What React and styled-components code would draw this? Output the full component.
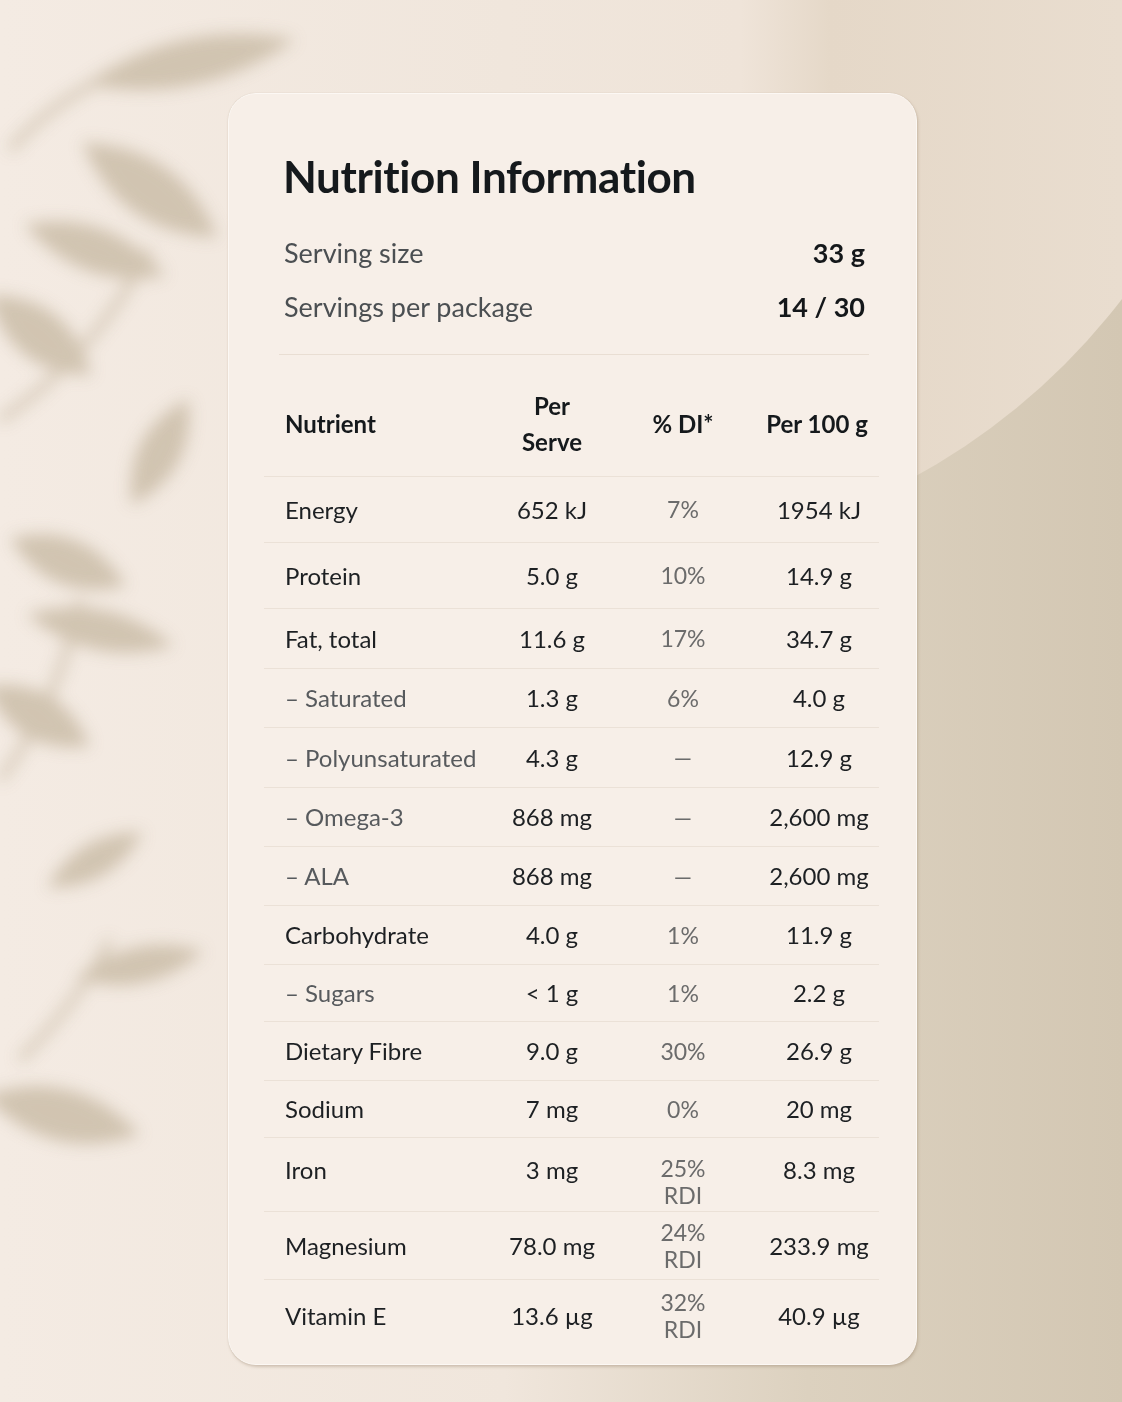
import React from "react";
import styled, { createGlobalStyle } from "styled-components";

const GlobalStyle = createGlobalStyle`
  html, body {
    margin: 0;
    padding: 0;
  }
  body {
    background: #f3e9e0;
    font-family: Lato, "Liberation Sans", sans-serif;
    -webkit-font-smoothing: antialiased;
  }
`;

const Page = styled.div`
  position: relative;
  width: 1122px;
  height: 1402px;
  overflow: hidden;
  box-sizing: border-box;
  padding: 93px 0 0 228px;
`;

const Backdrop = styled.svg`
  position: absolute;
  left: 0;
  top: 0;
  width: 1122px;
  height: 1402px;
  z-index: 0;
`;

const Card = styled.section`
  position: relative;
  z-index: 1;
  width: 689px;
  box-sizing: border-box;
  padding: 56px 37px 12px 35px;
  background: #f7efe8;
  border-radius: 28px;
  border: 1px solid #fcf8f4;
  box-shadow: 1px 2px 3px rgba(150, 125, 100, 0.35),
    0 0 1px rgba(150, 125, 100, 0.35);
`;

const Title = styled.h1`
  margin: 0 0 0 19px;
  font-size: 44px;
  line-height: 53px;
  font-weight: 700;
  letter-spacing: -0.4px;
  font-variant-ligatures: none;
  color: #15191c;
`;

const Summary = styled.div`
  margin: 22px 14px 0 20px;
`;

const SummaryRow = styled.div`
  display: flex;
  justify-content: space-between;
  align-items: center;
  height: 54px;
  font-size: 27px;
`;

const SummaryLabel = styled.span`
  color: #4b4f52;
`;

const SummaryValue = styled.span`
  color: #14171a;
  font-weight: 700;
`;

const Divider = styled.hr`
  margin: 21px 10px 0 15px;
  border: 0;
  border-top: 1px solid #e9ded3;
`;

const Table = styled.div`
  margin-top: 22px;
`;

const Row = styled.div`
  display: grid;
  grid-template-columns: 227px 122px 140px 128px;
  align-items: ${(p) => (p.$top ? "start" : "center")};
  box-sizing: border-box;
  min-height: ${(p) => p.$h}px;
  padding-top: ${(p) => (p.$top ? 17 : 0)}px;
  border-bottom: ${(p) => (p.$last ? "none" : "1px solid #ebe1d7")};
`;

const HeadCell = styled.div`
  font-size: 24px;
  line-height: 36px;
  font-weight: 700;
  color: #15191c;
  text-align: ${(p) => p.$align || "center"};
  padding-left: ${(p) => (p.$align === "left" ? 21 : 0)}px;
  padding-bottom: 6px;
`;

const NameCell = styled.div`
  padding-left: 21px;
  font-size: 24px;
  line-height: 30px;
  color: ${(p) => (p.$sub ? "#575a5d" : "#1d2023")};
`;

const ValueCell = styled.div`
  font-size: 24px;
  line-height: 30px;
  text-align: center;
  color: #1d2023;
  padding-left: ${(p) => p.$shift || 0}px;
`;

const DiCell = styled.div`
  font-size: 23px;
  line-height: 27px;
  text-align: center;
  color: #6b6b6b;
`;

const rows = [
  { name: "Energy", serve: "652 kJ", di: ["7%"], per100: "1954 kJ", h: 66 },
  { name: "Protein", serve: "5.0 g", di: ["10%"], per100: "14.9 g", h: 66 },
  { name: "Fat, total", serve: "11.6 g", di: ["17%"], per100: "34.7 g", h: 60 },
  { name: "Saturated", sub: true, serve: "1.3 g", di: ["6%"], per100: "4.0 g", h: 59 },
  { name: "Polyunsaturated", sub: true, serve: "4.3 g", di: ["—"], per100: "12.9 g", h: 60 },
  { name: "Omega-3", sub: true, serve: "868 mg", di: ["—"], per100: "2,600 mg", h: 59 },
  { name: "ALA", sub: true, serve: "868 mg", di: ["—"], per100: "2,600 mg", h: 59 },
  { name: "Carbohydrate", serve: "4.0 g", di: ["1%"], per100: "11.9 g", h: 59 },
  { name: "Sugars", sub: true, serve: "< 1 g", di: ["1%"], per100: "2.2 g", h: 57 },
  { name: "Dietary Fibre", serve: "9.0 g", di: ["30%"], per100: "26.9 g", h: 59 },
  { name: "Sodium", serve: "7 mg", di: ["0%"], per100: "20 mg", h: 57 },
  { name: "Iron", serve: "3 mg", di: ["25%", "RDI"], per100: "8.3 mg", h: 74, top: true },
  { name: "Magnesium", serve: "78.0 mg", di: ["24%", "RDI"], per100: "233.9 mg", h: 68 },
  { name: "Vitamin E", serve: "13.6 µg", di: ["32%", "RDI"], per100: "40.9 µg", h: 72 },
];

// blurred leaf shadows on the left: [cx, cy, length, width, angle]
const leaves = [
  [190, 62, 215, 46, -12],
  [150, 190, 165, 54, 35],
  [95, 250, 150, 44, 20],
  [40, 335, 130, 50, 38],
  [160, 452, 120, 42, -62],
  [68, 562, 125, 46, 22],
  [100, 630, 150, 40, 12],
  [38, 716, 120, 46, 30],
  [95, 860, 110, 34, -30],
  [140, 965, 130, 36, -12],
  [62, 1115, 160, 52, 14],
];

function Leaf({ cx, cy, len, wid, angle }) {
  const h = len / 2;
  const d = `M ${-h} 0 Q 0 ${-wid} ${h} 0 Q 0 ${wid} ${-h} 0 Z`;
  return <path d={d} transform={`translate(${cx} ${cy}) rotate(${angle})`} />;
}

function Scenery() {
  return (
    <Backdrop viewBox="0 0 1122 1402" aria-hidden="true">
      <defs>
        <linearGradient id="base" gradientUnits="userSpaceOnUse" x1="0" y1="0" x2="1122" y2="0">
          <stop offset="0" stopColor="#f4ebe3" />
          <stop offset="0.45" stopColor="#f0e6dc" />
          <stop offset="0.72" stopColor="#dcd1bf" />
          <stop offset="1" stopColor="#d3c7b3" />
        </linearGradient>
        <linearGradient id="lit" gradientUnits="userSpaceOnUse" x1="0" y1="0" x2="1122" y2="0">
          <stop offset="0" stopColor="#f4ebe3" />
          <stop offset="0.45" stopColor="#f0e6dc" />
          <stop offset="0.66" stopColor="#efe4d9" />
          <stop offset="0.74" stopColor="#e5d8c8" />
          <stop offset="1" stopColor="#e9ddcf" />
        </linearGradient>
        <filter id="soft" x="-50%" y="-50%" width="200%" height="200%">
          <feGaussianBlur stdDeviation="8" />
        </filter>
      </defs>
      <rect width="1122" height="1402" fill="url(#base)" />
      <circle cx="600" cy="-100" r="657" fill="url(#lit)" />
      <g fill="#cbbda8" opacity="0.85" filter="url(#soft)">
        {leaves.map(([cx, cy, len, wid, angle], i) => (
          <Leaf key={i} cx={cx} cy={cy} len={len} wid={wid} angle={angle} />
        ))}
        <path
          d="M 10 150 Q 70 80 180 50 M 0 420 Q 90 360 150 250 M 0 780 Q 60 700 80 600 M 20 1060 Q 80 1000 110 940"
          fill="none"
          stroke="#cbbda8"
          strokeWidth="7"
        />
      </g>
    </Backdrop>
  );
}

export default function App() {
  return (
    <Page>
      <GlobalStyle />
      <Scenery />
      <Card>
        <Title>Nutrition Information</Title>
        <Summary>
          <SummaryRow>
            <SummaryLabel>Serving size</SummaryLabel>
            <SummaryValue>33 g</SummaryValue>
          </SummaryRow>
          <SummaryRow>
            <SummaryLabel>Servings per package</SummaryLabel>
            <SummaryValue>14 / 30</SummaryValue>
          </SummaryRow>
        </Summary>
        <Divider />
        <Table>
          <Row $h={100}>
            <HeadCell $align="left">Nutrient</HeadCell>
            <HeadCell>
              Per
              <br />
              Serve
            </HeadCell>
            <HeadCell>% DI*</HeadCell>
            <HeadCell>Per 100 g</HeadCell>
          </Row>
          {rows.map((r, i) => (
            <Row key={r.name} $h={r.h} $top={r.top} $last={i === rows.length - 1}>
              <NameCell $sub={r.sub}>{r.sub ? `– ${r.name}` : r.name}</NameCell>
              <ValueCell>{r.serve}</ValueCell>
              <DiCell>
                {r.di.map((line, j) => (
                  <div key={j}>{line}</div>
                ))}
              </DiCell>
              <ValueCell $shift={4}>{r.per100}</ValueCell>
            </Row>
          ))}
        </Table>
      </Card>
    </Page>
  );
}
